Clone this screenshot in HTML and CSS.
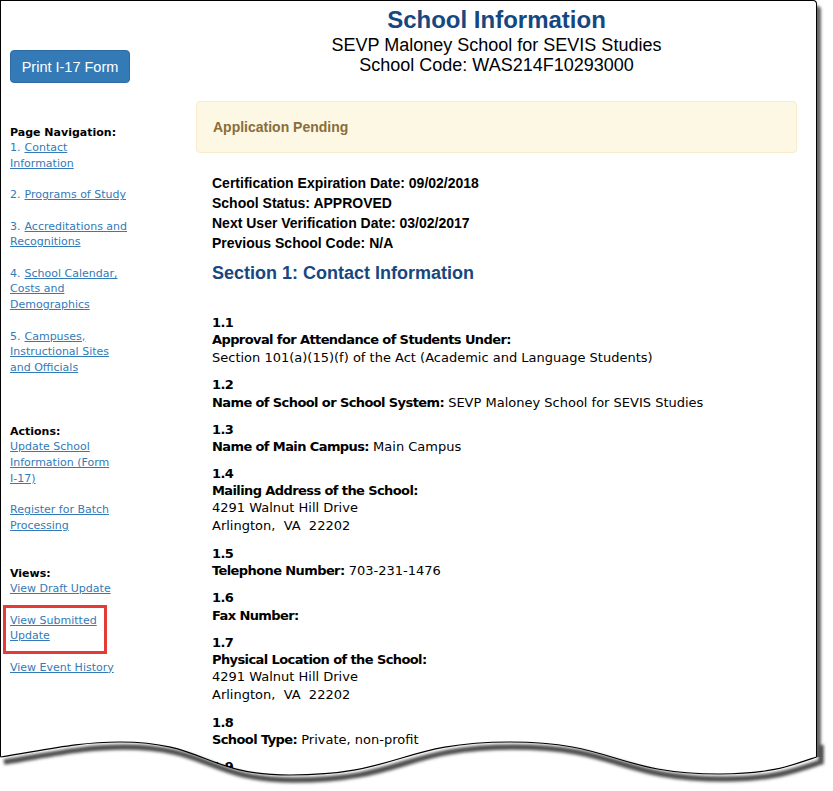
FILE: index.html
```html
<!DOCTYPE html>
<html lang="en">
<head>
<meta charset="utf-8">
<title>School Information</title>
<link rel="stylesheet" href="styles.css">
</head>
<body>
<div class="sheet">
  <div class="paper">
    <aside class="sidebar">
      <a class="btn" href="#">Print I-17 Form</a>
      <nav class="nav nav-page">
        <div class="nav-title">Page Navigation:</div>
        <div class="nav-item"><span class="nav-num">1.</span><a href="#">Contact Information</a></div>
        <div class="nav-item"><span class="nav-num">2.</span><a href="#">Programs of Study</a></div>
        <div class="nav-item"><span class="nav-num">3.</span><a href="#">Accreditations and Recognitions</a></div>
        <div class="nav-item"><span class="nav-num">4.</span><a href="#">School Calendar, Costs and Demographics</a></div>
        <div class="nav-item"><span class="nav-num">5.</span><a href="#">Campuses, Instructional Sites and Officials</a></div>
      </nav>
      <nav class="nav nav-actions">
        <div class="nav-title">Actions:</div>
        <div class="nav-item"><a href="#">Update School Information (Form <span class="nowrap">I-17)</span></a></div>
        <div class="nav-item"><a href="#">Register for Batch Processing</a></div>
      </nav>
      <nav class="nav nav-views">
        <div class="nav-title">Views:</div>
        <div class="nav-item"><a href="#">View Draft Update</a></div>
        <div class="nav-item highlight"><a href="#">View Submitted Update</a></div>
        <div class="nav-item"><a href="#">View Event History</a></div>
      </nav>
    </aside>
    <main class="content">
      <header class="page-head">
        <h1 class="page-title">School Information</h1>
        <p class="page-sub">SEVP Maloney School for SEVIS Studies</p>
        <p class="page-sub">School Code: WAS214F10293000</p>
      </header>
      <div class="alert">Application Pending</div>
      <div class="summary">
        <div>Certification Expiration Date: 09/02/2018</div>
        <div>School Status: APPROVED</div>
        <div>Next User Verification Date: 03/02/2017</div>
        <div>Previous School Code: N/A</div>
      </div>
      <h2 class="section-title">Section 1: Contact Information</h2>
      <div class="items">
        <div class="item">
          <div class="num">1.1</div>
          <div class="label"><b>Approval for Attendance of Students Under:</b></div>
          <div class="val">Section 101(a)(15)(f) of the Act (Academic and Language Students)</div>
        </div>
        <div class="item">
          <div class="num">1.2</div>
          <div class="label"><b>Name of School or School System:</b> SEVP Maloney School for SEVIS Studies</div>
        </div>
        <div class="item">
          <div class="num">1.3</div>
          <div class="label"><b>Name of Main Campus:</b> Main Campus</div>
        </div>
        <div class="item">
          <div class="num">1.4</div>
          <div class="label"><b>Mailing Address of the School:</b></div>
          <div class="val">4291 Walnut Hill Drive</div>
          <div class="val">Arlington,&nbsp; VA&nbsp; 22202</div>
        </div>
        <div class="item">
          <div class="num">1.5</div>
          <div class="label"><b>Telephone Number:</b> 703-231-1476</div>
        </div>
        <div class="item">
          <div class="num">1.6</div>
          <div class="label"><b>Fax Number:</b></div>
        </div>
        <div class="item">
          <div class="num">1.7</div>
          <div class="label"><b>Physical Location of the School:</b></div>
          <div class="val">4291 Walnut Hill Drive</div>
          <div class="val">Arlington,&nbsp; VA&nbsp; 22202</div>
        </div>
        <div class="item">
          <div class="num">1.8</div>
          <div class="label"><b>School Type:</b> Private, non-profit</div>
        </div>
        <div class="item">
          <div class="num">1.9</div>
        </div>
      </div>
    </main>
  </div>
  <svg class="tear" width="833" height="70" viewBox="0 730 833 70" aria-hidden="true">
    <defs>
      <filter id="blur" x="-5%" y="-50%" width="110%" height="200%">
        <feGaussianBlur stdDeviation="1.4"/>
      </filter>
    </defs>
    <path d="M0,757 C50,749 80,742 120,742 C205,742 205,775 290,775 C400,775 400,742 510,742 C615,742 615,774 720,774 C770,774 790,766 817,757 L833,757 L833,800 L0,800 Z" fill="#fff"/>
    <path d="M0,757 C50,749 80,742 120,742 C205,742 205,775 290,775 C400,775 400,742 510,742 C615,742 615,774 720,774 C770,774 790,766 817,757 L817,740" transform="translate(4,5)" fill="none" stroke="#4d4d4d" stroke-width="5.5" filter="url(#blur)"/>
    <path d="M0.5,757 C50,749 80,742 120,742 C205,742 205,775 290,775 C400,775 400,742 510,742 C615,742 615,774 720,774 C770,774 790,766 816.5,757" fill="none" stroke="#000" stroke-width="1.2"/>
  </svg>
</div>
</body>
</html>
```

FILE: styles.css
```css
body {
  margin: 0;
  background: #fff;
  font-family: "DejaVu Sans", Verdana, sans-serif;
  color: #000;
}

.sheet {
  position: relative;
  width: 833px;
  height: 791px;
  overflow: hidden;
}

.paper {
  width: 815px;
  height: 820px;
  border: 1px solid #000;
  border-bottom: none;
  border-top-right-radius: 4px;
  box-shadow: 4px 6px 3px rgba(0, 0, 0, 0.6);
  background: #fff;
  display: grid;
  grid-template-columns: 195px 601px;
  align-items: start;
}

/* Sidebar */
.sidebar {
  padding: 49px 0 0 9px;
}

.btn {
  display: block;
  box-sizing: border-box;
  width: 120px;
  height: 33px;
  border: 1px solid #2e6da4;
  border-radius: 4px;
  background: #337ab7;
  color: #fff;
  text-decoration: none;
  text-align: center;
  font-family: "Liberation Sans", Arial, sans-serif;
  font-size: 14.5px;
  line-height: 32px;
}

.nav {
  width: 122px;
  font-size: 11px;
  line-height: 15.7px;
}

.nav-page { margin-top: 41.5px; }
.nav-actions { margin-top: 48px; }
.nav-views { margin-top: 32px; }

.nav-title {
  font-weight: bold;
}

.nav-item + .nav-item {
  margin-top: 15.7px;
}

.nav-num {
  color: #337ab7;
  margin-right: 4px;
}

.nav a {
  color: #337ab7;
  text-decoration: underline;
}

.nowrap {
  white-space: nowrap;
}

.highlight {
  position: relative;
}

.highlight::after {
  content: "";
  position: absolute;
  left: -7px;
  top: -8px;
  width: 104px;
  height: 49px;
  box-sizing: border-box;
  border: 3px solid #e53b37;
}

/* Main content */
.content {
  width: 601px;
}

.page-head {
  text-align: center;
  font-family: "Liberation Sans", Arial, sans-serif;
}

.page-title {
  margin: 4px 0 0;
  font-size: 24px;
  line-height: 30px;
  font-weight: bold;
  color: #17477f;
}

.page-sub {
  margin: 0;
  font-size: 18px;
  line-height: 20px;
}

.alert {
  margin-top: 26px;
  padding: 15px 16px;
  border: 1px solid #faebcc;
  border-radius: 4px;
  background: #fcf8e3;
  color: #8a6d3b;
  font-family: "Liberation Sans", Arial, sans-serif;
  font-weight: bold;
  font-size: 14px;
  line-height: 20px;
}

.summary {
  margin-top: 20px;
  padding-left: 16px;
  font-family: "Liberation Sans", Arial, sans-serif;
  font-weight: bold;
  font-size: 14px;
  line-height: 20px;
}

.section-title {
  margin: 10px 0 0;
  padding-left: 16px;
  font-family: "Liberation Sans", Arial, sans-serif;
  font-size: 18px;
  line-height: 20px;
  font-weight: bold;
  color: #17477f;
}

.items {
  margin-top: 31px;
  padding-left: 16px;
  font-size: 13px;
}

.item {
  margin-bottom: 9.6px;
}

.num,
.label {
  line-height: 17.33px;
}

.num,
.label b {
  font-weight: bold;
  letter-spacing: -0.6px;
}

.val {
  line-height: 18px;
}

.tear {
  position: absolute;
  left: 0;
  top: 730px;
}
```
